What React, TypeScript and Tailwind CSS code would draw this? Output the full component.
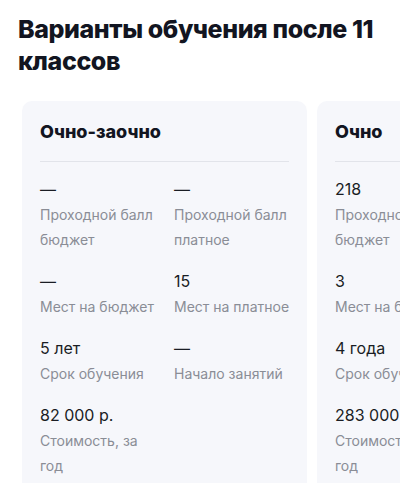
const cards = [
  {
    title: "Очно-заочно",
    items: [
      { value: "—", label: "Проходной балл бюджет" },
      { value: "—", label: "Проходной балл платное" },
      { value: "—", label: "Мест на бюджет" },
      { value: "15", label: "Мест на платное" },
      { value: "5 лет", label: "Срок обучения" },
      { value: "—", label: "Начало занятий" },
      { value: "82 000 р.", label: "Стоимость, за год" },
    ],
  },
  {
    title: "Очно",
    items: [
      { value: "218", label: "Проходной балл бюджет" },
      { value: "—", label: "Проходной балл платное" },
      { value: "3", label: "Мест на бюджет" },
      { value: "30", label: "Мест на платное" },
      { value: "4 года", label: "Срок обучения" },
      { value: "—", label: "Начало занятий" },
      { value: "283 000 р.", label: "Стоимость, за год" },
    ],
  },
];

export default function App() {
  return (
    <div
      className="w-[400px] h-[483px] overflow-hidden bg-white"
      style={{ fontFamily: "Inter, 'Noto Sans', sans-serif" }}
    >
      <h1 className="px-[18px] pt-[13px] text-[25px] leading-[32px] font-extrabold text-[#121521] tracking-[-0.4px]">
        Варианты обучения после 11 классов
      </h1>

      <div className="flex gap-[10px] pl-[22px] pt-[24px]">
        {cards.map((card) => (
          <div
            key={card.title}
            className="w-[285px] shrink-0 rounded-[10px] bg-[#f6f7fb] px-[18px] pt-[18px] pb-[20px]"
          >
            <h2 className="text-[18px] leading-[26px] font-extrabold text-[#121521]">
              {card.title}
            </h2>
            <div className="mt-[16px] h-px bg-[#e2e4ea]" />
            <div className="mt-[15px] grid grid-cols-[118px_118px] gap-x-[16px] gap-y-[17px]">
              {card.items.map((item, i) => (
                <div key={i}>
                  <div className="text-[16px] leading-[25px] text-[#1a1d24] whitespace-nowrap">{item.value}</div>
                  <div className="text-[14px] leading-[25px] text-[#8a8d96]">{item.label}</div>
                </div>
              ))}
            </div>
          </div>
        ))}
      </div>
    </div>
  );
}
